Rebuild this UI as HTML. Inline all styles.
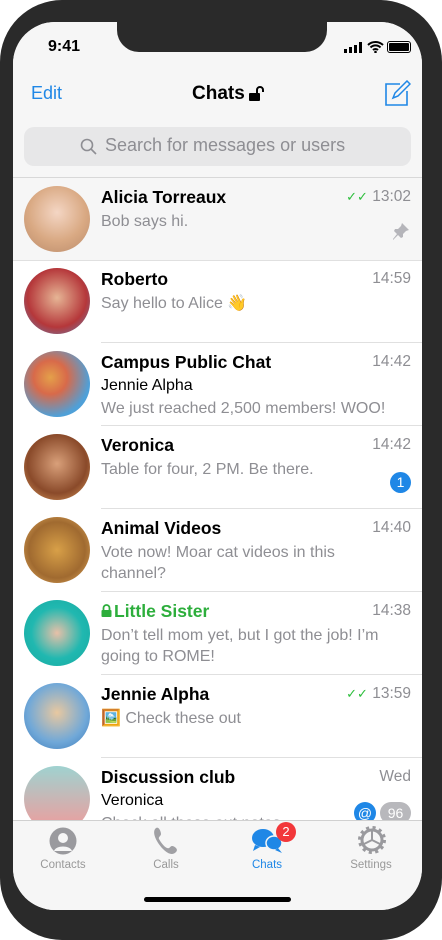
<!DOCTYPE html><html><head><style>
*{margin:0;padding:0;box-sizing:border-box}
body{width:442px;height:940px;background:#fff;font-family:"Liberation Sans",sans-serif;position:relative;overflow:hidden}
.frame{position:absolute;left:0;top:0;width:442px;height:940px;border-radius:62px;background:#2a2a2a}
.scr{position:absolute;left:13px;top:22px;width:409px;height:888px;border-radius:42px;background:#fff;overflow:hidden}
.notch{position:absolute;left:104px;top:0;width:210px;height:30px;background:#2a2a2a;border-radius:0 0 22px 22px}
.top{position:absolute;left:0;top:0;width:409px;height:156px;background:#f6f6f6;border-bottom:1px solid #d8d8d8}
.abs{position:absolute}
.row{position:absolute;left:0;width:409px;height:83px}
.av{position:absolute;left:11px;top:8px;width:66px;height:66px;border-radius:50%}
.nm{position:absolute;left:88px;top:9px;font-size:17.5px;font-weight:bold;color:#000}
.tm{position:absolute;right:11px;top:10px;font-size:15.5px;color:#8e8e93}
.ms{position:absolute;left:88px;top:33px;font-size:16px;color:#8e8e93;line-height:21px;width:300px}
.sn{position:absolute;left:88px;top:34px;font-size:16px;color:#000}
.sep{position:absolute;left:88px;right:0;bottom:0;height:1px;background:#e0e0e0}
.tab{position:absolute;top:798px;left:0;width:409px;height:90px;background:#f6f6f6;border-top:1px solid #d0d0d0}
.tl{position:absolute;top:38px;font-size:11.5px;color:#999;text-align:center;width:80px}
</style></head><body>
<div class="frame"></div>
<div class="scr">
<div class="top">
<div class="abs" style="left:35px;top:16px;font-size:16px;font-weight:bold">9:41</div>
<div class="abs" style="right:60px;top:20px;width:18px;height:11px">
<div class="abs" style="left:0;bottom:0;width:3px;height:4px;background:#000"></div><div class="abs" style="left:5px;bottom:0;width:3px;height:6px;background:#000"></div><div class="abs" style="left:10px;bottom:0;width:3px;height:8px;background:#000"></div><div class="abs" style="left:15px;bottom:0;width:3px;height:11px;background:#000"></div></div>
<svg class="abs" style="right:38px;top:18px" width="17" height="13" viewBox="0 0 17 13"><path d="M1 5a11 11 0 0 1 15 0M3.5 7.5a7 7 0 0 1 10 0M6 10a3.5 3.5 0 0 1 5 0" stroke="#000" stroke-width="2" fill="none"/><circle cx="8.5" cy="12" r="1.3"/></svg>
<div class="abs" style="right:11px;top:19px;width:24px;height:12px;border:1.5px solid #000;border-radius:3px;padding:1px"><div style="background:#000;width:100%;height:100%;border-radius:1px"></div></div>
<div class="abs" style="left:18px;top:61px;font-size:18px;color:#1f87e6">Edit</div>
<div class="abs" style="left:179px;top:61px;font-size:19px;font-weight:bold">Chats</div>
<svg class="abs" style="left:236px;top:63px" width="16" height="17" viewBox="0 0 16 17"><path d="M8 8V5a3 3 0 0 1 6 0v2" stroke="#000" stroke-width="2" fill="none"/><rect x="0" y="8" width="11" height="8" rx="1"/></svg>
<svg class="abs" style="left:371px;top:58px" width="27" height="27" viewBox="0 0 27 27"><path d="M16 4H2v21h21V11" stroke="#1f87e6" stroke-width="1.6" fill="none"/><path d="M9 18l2-5L23 1l3 3-12 12z" stroke="#1f87e6" stroke-width="1.5" fill="none"/></svg>
<div class="abs" style="left:11px;top:105px;width:387px;height:39px;background:#e7e7e8;border-radius:10px"></div>
<svg class="abs" style="left:67px;top:116px" width="17" height="17" viewBox="0 0 17 17"><circle cx="7" cy="7" r="5.5" stroke="#8e8e93" stroke-width="1.6" fill="none"/><path d="M11 11l5 5" stroke="#8e8e93" stroke-width="1.6"/></svg>
<div class="abs" style="left:92px;top:113px;font-size:18px;color:#8e8e93">Search for messages or users</div>
</div>
<div class="notch"></div>

<div class="row" style="top:156px;background:#f6f6f6;border-bottom:1px solid #e0e0e0"><div class="av" style="background:radial-gradient(circle at 50% 40%,#f4d6c4,#d9a983 55%,#b98a6a)"></div><div class="nm">Alicia Torreaux</div><div class="tm"><span style="color:#2dbe3c;font-size:13px">✓✓</span> 13:02</div><div class="ms">Bob says hi.</div>
<svg class="abs" style="right:12px;top:44px" width="18" height="18" viewBox="0 0 18 18"><path d="M10 1l7 7-3 1-3 3 0 3-2 1-3-3-5 5v-1l4-5-3-3 1-2h3l3-3z" fill="#b5b5ba"/></svg></div>

<div class="row" style="top:238px"><div class="av" style="background:radial-gradient(circle at 50% 45%,#e6b595,#b5373a 60%,#5a8ac0)"></div><div class="nm">Roberto</div><div class="tm">14:59</div><div class="ms">Say hello to Alice 👋</div><div class="sep"></div></div>

<div class="row" style="top:321px"><div class="av" style="background:radial-gradient(circle at 40% 40%,#e4a04a,#d86a4a 30%,#4fa0d8 70%)"></div><div class="nm">Campus Public Chat</div><div class="tm">14:42</div><div class="sn">Jennie Alpha</div><div class="ms" style="top:55px;width:320px">We just reached 2,500 members! WOO!</div><div class="sep"></div></div>

<div class="row" style="top:404px"><div class="av" style="background:radial-gradient(circle at 50% 45%,#d9a07a,#8a4a2a 60%,#e0a060)"></div><div class="nm">Veronica</div><div class="tm">14:42</div><div class="ms">Table for four, 2 PM. Be there.</div><div class="abs" style="right:11px;top:46px;width:21px;height:21px;border-radius:50%;background:#1f87e6;color:#fff;font-size:14px;text-align:center;line-height:21px">1</div><div class="sep"></div></div>

<div class="row" style="top:487px"><div class="av" style="background:radial-gradient(circle at 50% 50%,#d8a048,#a06a30 60%,#e8b060)"></div><div class="nm">Animal Videos</div><div class="tm">14:40</div><div class="ms" style="width:270px">Vote now! Moar cat videos in this channel?</div><div class="sep"></div></div>

<div class="row" style="top:570px"><div class="av" style="background:radial-gradient(circle at 50% 50%,#e8c0a8,#20b8b0 55%,#18a8a0)"></div>
<svg class="abs" style="left:88px;top:12px" width="11" height="13" viewBox="0 0 11 13"><path d="M2.5 6V4a3 3 0 0 1 6 0v2" stroke="#2dae3c" stroke-width="1.8" fill="none"/><rect x="0.5" y="6" width="10" height="7" rx="1" fill="#2dae3c"/></svg>
<div class="nm" style="left:101px;color:#2dae3c">Little Sister</div><div class="tm">14:38</div><div class="ms">Don’t tell mom yet, but I got the job! I’m going to ROME!</div><div class="sep"></div></div>

<div class="row" style="top:653px"><div class="av" style="background:radial-gradient(circle at 50% 45%,#e8c8a0,#70a8d8 60%,#3a78b8)"></div><div class="nm">Jennie Alpha</div><div class="tm"><span style="color:#2dbe3c;font-size:13px">✓✓</span> 13:59</div><div class="ms">🖼️ Check these out</div><div class="sep"></div></div>

<div class="row" style="top:736px"><div class="av" style="background:linear-gradient(#9fd2d0,#f29a9a)"></div><div class="nm">Discussion club</div><div class="tm">Wed</div><div class="sn">Veronica</div><div class="ms" style="top:55px">Check all these out notes</div>
<div class="abs" style="right:46px;top:44px;width:22px;height:22px;border-radius:50%;background:#1f87e6;color:#fff;font-size:14px;text-align:center;line-height:22px">@</div>
<div class="abs" style="right:11px;top:44px;width:31px;height:22px;border-radius:11px;background:#b8b8bc;color:#fff;font-size:14px;text-align:center;line-height:22px">96</div></div>

<div class="tab">
<svg class="abs" style="left:36px;top:6px" width="28" height="28" viewBox="0 0 28 28"><circle cx="14" cy="14" r="13.5" fill="#9a9a9e"/><circle cx="14" cy="11" r="5" fill="#f6f6f6"/><path d="M5 24c2-6 16-6 18 0" fill="#f6f6f6"/></svg>
<div class="tl" style="left:10px">Contacts</div>
<svg class="abs" style="left:138px;top:5px" width="30" height="30" viewBox="0 0 30 30"><path d="M5 2c3-2 5 4 5 6s-3 3-2 5 5 8 8 9 3-2 5-2 7 3 4 6-7 3-13-3S0 6 5 2z" fill="#a0a0a4"/></svg>
<div class="tl" style="left:113px">Calls</div>
<svg class="abs" style="left:238px;top:6px" width="34" height="30" viewBox="0 0 34 30"><ellipse cx="12" cy="11" rx="11" ry="9" fill="#1f87e6"/><path d="M4 18l-2 6 7-4z" fill="#1f87e6"/><ellipse cx="23" cy="16" rx="8" ry="7" fill="#1f87e6" stroke="#f6f6f6" stroke-width="1.5"/><path d="M27 21l4 5-7-3z" fill="#1f87e6"/></svg>
<div class="abs" style="left:263px;top:1px;width:20px;height:20px;border-radius:50%;background:#f2373a;color:#fff;font-size:13px;text-align:center;line-height:20px">2</div>
<div class="tl" style="left:214px;color:#1f87e6">Chats</div>
<svg class="abs" style="left:344px;top:4px" width="30" height="30" viewBox="0 0 30 30"><circle cx="15" cy="15" r="10" stroke="#9a9a9e" stroke-width="3" fill="none"/><circle cx="15" cy="15" r="12" stroke="#9a9a9e" stroke-width="4" stroke-dasharray="3 3.3" fill="none"/><path d="M15 15V6M15 15l8 4M15 15l-8 4" stroke="#9a9a9e" stroke-width="2"/></svg>
<div class="tl" style="left:318px">Settings</div>
<div class="abs" style="left:131px;top:76px;width:147px;height:5px;border-radius:3px;background:#000"></div>
</div>
</div>
</body></html>
